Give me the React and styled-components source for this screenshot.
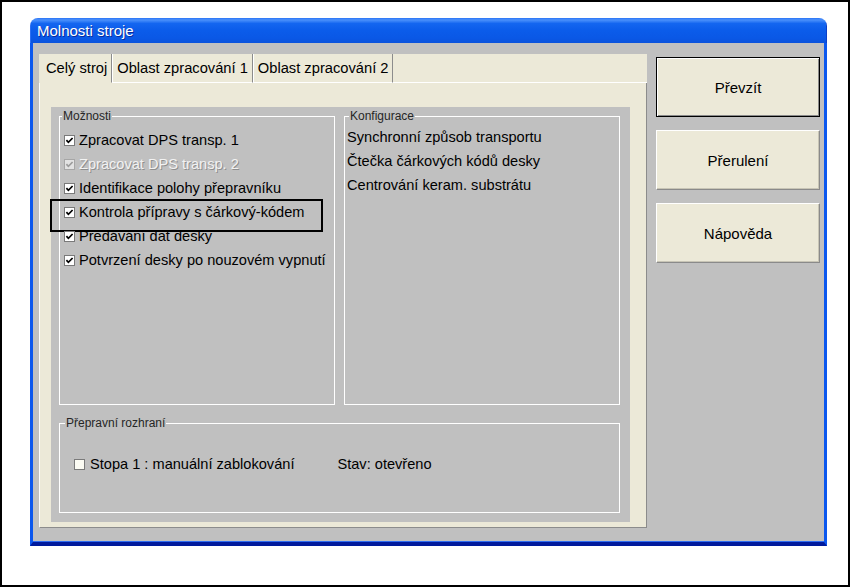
import React from "react";
import styled, { createGlobalStyle } from "styled-components";

const GlobalStyle = createGlobalStyle`
  html, body { margin: 0; padding: 0; background: #fff; }
  body { font-family: "Liberation Sans", Arial, sans-serif; color: #000; }
  * { box-sizing: border-box; }
`;

const Page = styled.div`
  width: 850px;
  height: 587px;
  border: 2px solid #000;
  padding: 16px 0 0 28px;
  background: #fff;
`;

const Window = styled.div`
  width: 797px;
  height: 528px;
  display: flex;
  flex-direction: column;
  border-radius: 8px 8px 0 0;
  overflow: hidden;
`;

const TitleBar = styled.div`
  height: 25px;
  flex: none;
  display: flex;
  align-items: center;
  padding-left: 6px;
  color: #fff;
  font-size: 15px;
  text-shadow: 1px 1px 0 #0b2c9c;
  background: linear-gradient(
    180deg,
    #2a74f6 0%,
    #4a90fb 8%,
    #1466f0 22%,
    #0b5cea 50%,
    #0a58e6 80%,
    #0a52dc 100%
  );
  border-left: 1px solid #2c6ff2;
  border-right: 1px solid #0a3fc8;
`;

const Body = styled.div`
  flex: 1;
  display: flex;
  gap: 9px;
  background: #c0c0c0;
  border-left: 3px solid #0b57ee;
  border-right: 3px solid #0b57ee;
  border-bottom: 4px solid #001a9c;
  box-shadow: inset 0 -1px 0 #2f6cf0;
  padding: 11px 4px 14px 6px;
`;

const TabControl = styled.div`
  width: 608px;
  flex: none;
  display: flex;
  flex-direction: column;
  background: #ece9d8;
`;

const TabStrip = styled.div`
  height: 29px;
  flex: none;
  display: flex;
`;

const Tab = styled.div`
  display: flex;
  align-items: center;
  padding: 0 4px 0 ${(p) => (p.$first ? 7 : 4)}px;
  font-size: 14.7px;
  white-space: nowrap;
  border-right: 1px solid #8c8c8c;
  border-left: ${(p) => (p.$first ? "none" : "1px solid #fff")};
  border-bottom: 1px solid ${(p) => (p.$active ? "transparent" : "#fff")};
`;

const TabFill = styled.div`
  flex: 1;
  border-bottom: 1px solid #fff;
`;

const Panel = styled.div`
  flex: 1;
  display: flex;
  border-left: 1px solid #fff;
  border-right: 1px solid #8c8c8c;
  border-bottom: 1px solid #8c8c8c;
  padding: 24px 16px 5px 11px;
`;

const InnerArea = styled.div`
  flex: 1;
  display: flex;
  flex-direction: column;
  gap: 11px;
  background: #c0c0c0;
  padding: 2px 10px 9px 8px;
`;

const TopRow = styled.div`
  height: 296px;
  flex: none;
  display: grid;
  grid-template-columns: 276px 276px;
  gap: 9px;
`;

const GroupBox = styled.fieldset`
  margin: 0;
  min-width: 0;
  border: 1px solid #fff;
  padding: ${(p) => p.$pad};
  height: ${(p) => (p.$height ? `${p.$height}px` : "auto")};
  flex: none;
`;

const Legend = styled.legend`
  font-size: 12px;
  line-height: 14px;
  color: #262626;
  padding: 0 1px;
  margin-left: ${(p) => p.$offset}px;
`;

const Row = styled.div`
  height: 24px;
  display: flex;
  align-items: center;
  gap: ${(p) => p.$gap ?? 4}px;
  font-size: 14.6px;
  white-space: nowrap;
  position: relative;
  color: ${(p) => (p.$disabled ? "#f2f2f2" : "#000")};
  text-shadow: ${(p) => (p.$disabled ? "1px 1px 0 #8e8e8e" : "none")};

  ${(p) =>
    p.$highlight &&
    `
    &::after {
      content: "";
      position: absolute;
      left: -14px;
      top: -1px;
      width: 269px;
      height: 29px;
      border: 2px solid #000;
    }
  `}
`;

const ConfigText = styled.div`
  height: 24px;
  display: flex;
  align-items: center;
  font-size: 14.6px;
  white-space: nowrap;
`;

const Status = styled.span`
  margin-left: 38px;
`;

const BoxSvg = styled.svg`
  flex: none;
  display: block;
`;

const ButtonColumn = styled.div`
  width: 164px;
  flex: none;
  display: flex;
  flex-direction: column;
  gap: 13px;
  padding-top: 3px;
`;

const Button = styled.button`
  width: 164px;
  height: 60px;
  padding: 0;
  margin: 0;
  font-family: "Liberation Sans", Arial, sans-serif;
  font-size: 15px;
  color: #000;
  background: #ece9d8;
  border: 1px solid ${(p) => (p.$default ? "#000" : "#fff")};
  border-right-color: ${(p) => (p.$default ? "#000" : "#8a8a8a")};
  border-bottom-color: ${(p) => (p.$default ? "#000" : "#8a8a8a")};
  box-shadow: ${(p) =>
    p.$default
      ? "inset 1px 1px 0 #fff, inset -1px -1px 0 #8a8a8a"
      : "inset -1px -1px 0 #c8c5b6"};
`;

const CheckBox = ({ checked, disabled, fill }) => (
  <BoxSvg width="11" height="11" viewBox="0 0 11 11">
    <rect
      x="0.5"
      y="0.5"
      width="10"
      height="10"
      fill={fill || (disabled ? "#e2e2e2" : "#fff")}
      stroke={disabled ? "#a6a6a6" : "#7a7a7a"}
    />
    {checked && (
      <path
        d="M2.4 5.1 L4.4 7.3 L8.6 3"
        fill="none"
        stroke={disabled ? "#9c9c9c" : "#000"}
        strokeWidth="1.7"
      />
    )}
  </BoxSvg>
);

const options = [
  { text: "Zpracovat DPS transp. 1" },
  { text: "Zpracovat DPS transp. 2", disabled: true },
  { text: "Identifikace polohy přepravníku" },
  { text: "Kontrola přípravy s čárkový-kódem", highlight: true },
  { text: "Předávání dat desky" },
  { text: "Potvrzení desky po nouzovém vypnutí" },
];

const config = [
  "Synchronní způsob transportu",
  "Čtečka čárkových kódů desky",
  "Centrování keram. substrátu",
];

export default function App() {
  return (
    <>
      <GlobalStyle />
      <Page>
        <Window>
          <TitleBar>Molnosti stroje</TitleBar>
          <Body>
            <TabControl>
              <TabStrip>
                <Tab $first $active>
                  Celý stroj
                </Tab>
                <Tab>Oblast zpracování 1</Tab>
                <Tab>Oblast zpracování 2</Tab>
                <TabFill />
              </TabStrip>
              <Panel>
                <InnerArea>
                  <TopRow>
                    <GroupBox $pad="5px 4px 0 4px">
                      <Legend $offset={-2}>Možnosti</Legend>
                      {options.map((o) => (
                        <Row
                          key={o.text}
                          $disabled={o.disabled}
                          $highlight={o.highlight}
                        >
                          <CheckBox checked disabled={o.disabled} />
                          {o.text}
                        </Row>
                      ))}
                    </GroupBox>
                    <GroupBox $pad="2px 2px 0 2px">
                      <Legend $offset={2}>Konfigurace</Legend>
                      {config.map((c) => (
                        <ConfigText key={c}>{c}</ConfigText>
                      ))}
                    </GroupBox>
                  </TopRow>
                  <GroupBox $pad="22px 14px 0 14px" $height={97}>
                    <Legend $offset={-9}>Přepravní rozhraní</Legend>
                    <Row $gap={5}>
                      <CheckBox fill="#fbfbf3" />
                      Stopa 1 : manuální zablokování
                      <Status>Stav: otevřeno</Status>
                    </Row>
                  </GroupBox>
                </InnerArea>
              </Panel>
            </TabControl>
            <ButtonColumn>
              <Button $default>Převzít</Button>
              <Button>Přerulení</Button>
              <Button>Nápověda</Button>
            </ButtonColumn>
          </Body>
        </Window>
      </Page>
    </>
  );
}
